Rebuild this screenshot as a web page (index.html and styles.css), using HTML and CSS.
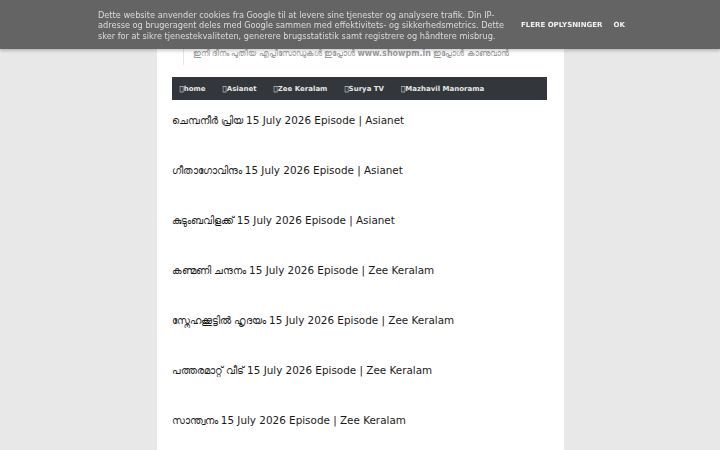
FILE: index.html
```html
<!DOCTYPE html>
<html lang="ml">
<head>
    <meta charset="UTF-8">
    <meta name="viewport" content="width=device-width, initial-scale=1.0">
    <title>Malayalam Serials</title>
    <link rel="stylesheet" href="styles.css">
</head>
<body>

    <div class="cookie-bar">
        <p class="cookie-text">Dette website anvender cookies fra Google til at levere sine tjenester og analysere trafik. Din IP-adresse og brugeragent deles med Google sammen med effektivitets- og sikkerhedsmetrics. Dette sker for at sikre tjenestekvaliteten, generere brugsstatistik samt registrere og håndtere misbrug.</p>
        <div class="cookie-buttons">
            <a href="#" class="cookie-link">Flere oplysninger</a>
            <a href="#" class="cookie-link">OK</a>
        </div>
    </div>

    <div class="page">
        <div class="header">
            <p class="description">ഇനി ദിനം പുതിയ എപ്പിസോഡുകൾ ഇപ്പോൾ <b>www.showpm.in</b> ഇപ്പോൾ കാണുവാൻ</p>
        </div>

        <ul class="nav">
            <li><a href="#">&#xf015;home</a></li>
            <li><a href="#">&#xf26c;Asianet</a></li>
            <li><a href="#">&#xf26c;Zee Keralam</a></li>
            <li><a href="#">&#xf26c;Surya TV</a></li>
            <li><a href="#">&#xf26c;Mazhavil Manorama</a></li>
        </ul>

        <div class="posts">
            <h3 class="post-title"><a href="#">ചെമ്പനീർ പ്രിയ 15 July 2026 Episode | Asianet</a></h3>
            <h3 class="post-title"><a href="#">ഗീതാഗോവിന്ദം 15 July 2026 Episode | Asianet</a></h3>
            <h3 class="post-title"><a href="#">കുടുംബവിളക്ക് 15 July 2026 Episode | Asianet</a></h3>
            <h3 class="post-title"><a href="#">കണ്മണി ചന്ദനം 15 July 2026 Episode | Zee Keralam</a></h3>
            <h3 class="post-title"><a href="#">സ്നേഹക്കൂട്ടിൽ ഹൃദയം 15 July 2026 Episode | Zee Keralam</a></h3>
            <h3 class="post-title"><a href="#">പത്തരമാറ്റ് വീട് 15 July 2026 Episode | Zee Keralam</a></h3>
            <h3 class="post-title"><a href="#">സാന്ത്വനം 15 July 2026 Episode | Zee Keralam</a></h3>
        </div>
    </div>

</body>
</html>
```

FILE: styles.css
```css
body {
    margin: 0;
    background-color: #e8e8e8;
    font-family: 'DejaVu Sans', sans-serif;
}

/* cookie notice pinned over the top of the blog */
.cookie-bar {
    position: fixed;
    top: 0;
    left: 0;
    right: 0;
    z-index: 10;
    display: flex;
    align-items: center;
    padding: 0 0 0 98px;
    height: 49px;
    background-color: #646464;
    box-shadow: 0 2px 3px rgba(0, 0, 0, 0.2);
}
.cookie-text {
    margin: 2px 0 0;
    width: 410px;
    color: #dcdcdc;
    font-size: 8.2px;
    line-height: 10.5px;
}
.cookie-buttons {
    display: flex;
    gap: 11px;
    margin-left: 13px;
}
.cookie-link {
    color: #f2f2f2;
    font-size: 7px;
    font-weight: bold;
    text-transform: uppercase;
    text-decoration: none;
}

.page {
    width: 407px;
    margin: 0 auto;
    min-height: 450px;
    padding: 0 17px 0 15px;
    box-sizing: border-box;
    background-color: #fff;
}

.header {
    padding: 45px 0 0 11px;
}
.description {
    margin: 0;
    padding: 3px 0 6px 9px;
    border-left: 1px solid #e6e6e6;
    color: #999;
    font-size: 7.5px;
    line-height: 11px;
}
.description b {
    font-size: 8px;
}

.nav {
    display: flex;
    margin: 12px 0 0;
    padding: 0 0 0 8px;
    height: 23px;
    list-style: none;
    align-items: center;
    background-color: #33373b;
}
.nav li a {
    display: block;
    margin-right: 17px;
    color: #e6e6e6;
    font-size: 7px;
    font-weight: bold;
    text-decoration: none;
}

.posts {
    padding-top: 12px;
}
.post-title {
    margin: 0 0 33px;
    font-size: 10.4px;
    font-weight: normal;
    line-height: 17px;
}
.post-title a {
    color: #1a1a1a;
    text-decoration: none;
}
```
